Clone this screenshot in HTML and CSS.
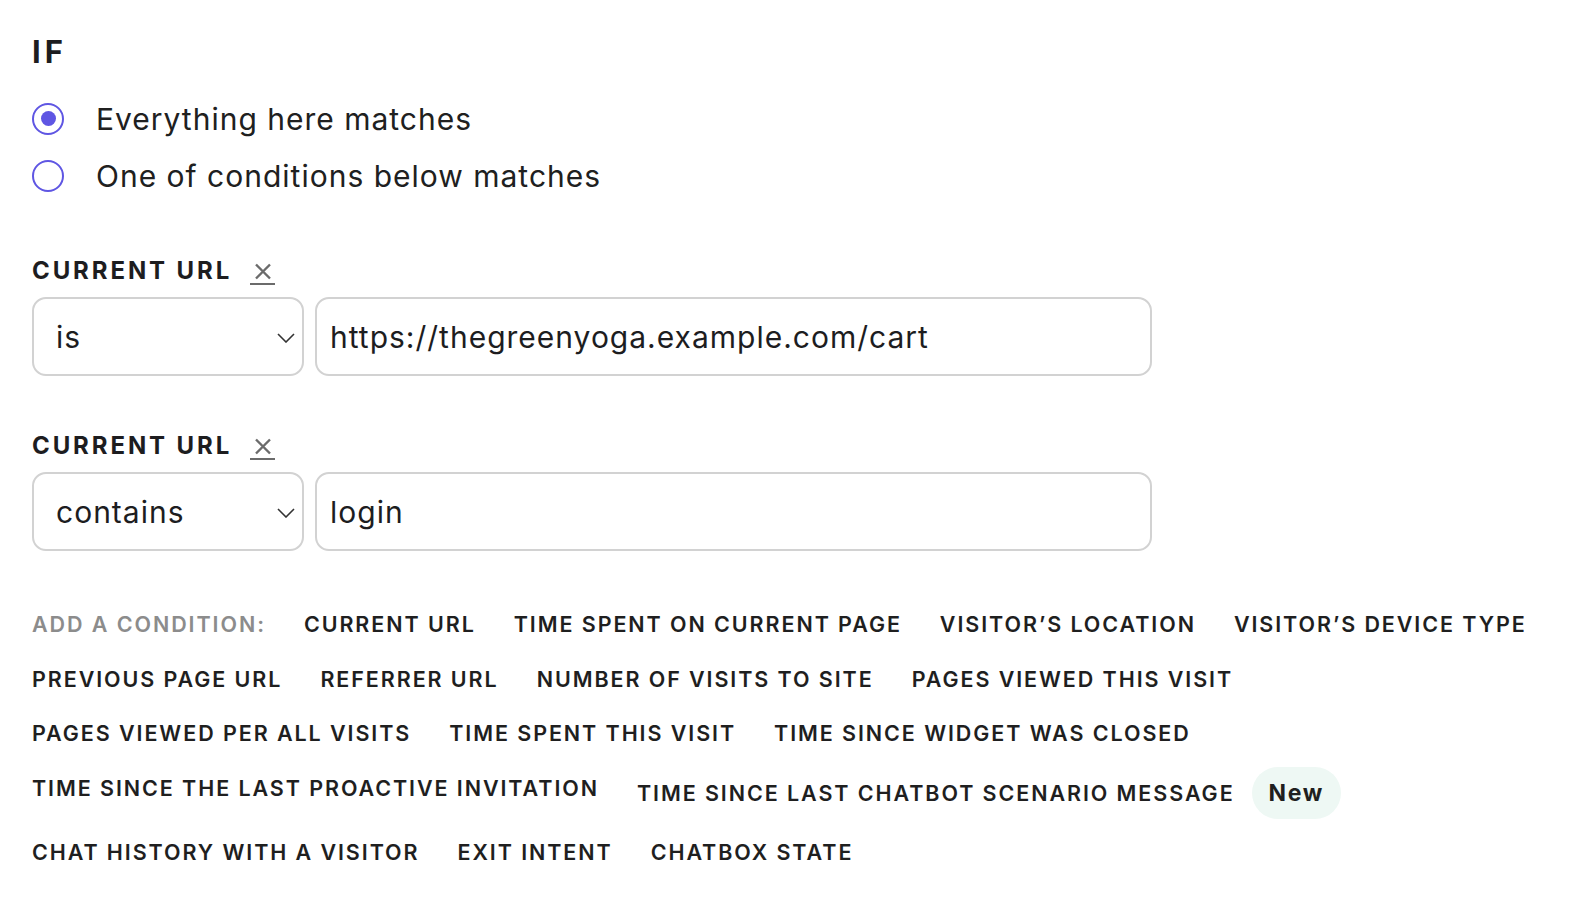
FILE: index.html
```html
<!DOCTYPE html>
<html>
<head>
<meta charset="utf-8">
<link rel="stylesheet" href="styles.css">
</head>
<body>
<div class="page">
  <h2 class="title">IF</h2>
  <div class="radios">
    <label class="radio-row"><span class="radio checked"><span class="dot"></span></span><span class="radio-text">Everything here matches</span></label>
    <label class="radio-row"><span class="radio"></span><span class="radio-text">One of conditions below matches</span></label>
  </div>

  <div class="condition first">
    <div class="cond-head">
      <span class="cond-label">CURRENT URL</span>
      <span class="remove"><svg width="18" height="17" viewBox="0 0 18 17"><path d="M2 1.5 L16 15.5 M16 1.5 L2 15.5" stroke="#6b6b6b" stroke-width="2.4" fill="none"/></svg></span>
    </div>
    <div class="cond-row">
      <div class="select"><span>is</span><svg class="chev" width="18" height="10" viewBox="0 0 18 10"><path d="M1 1 L9 9 L17 1" stroke="#333" stroke-width="1.6" fill="none"/></svg></div>
      <div class="input">https://thegreenyoga.example.com/cart</div>
    </div>
  </div>

  <div class="condition">
    <div class="cond-head">
      <span class="cond-label">CURRENT URL</span>
      <span class="remove"><svg width="18" height="17" viewBox="0 0 18 17"><path d="M2 1.5 L16 15.5 M16 1.5 L2 15.5" stroke="#6b6b6b" stroke-width="2.4" fill="none"/></svg></span>
    </div>
    <div class="cond-row">
      <div class="select"><span>contains</span><svg class="chev" width="18" height="10" viewBox="0 0 18 10"><path d="M1 1 L9 9 L17 1" stroke="#333" stroke-width="1.6" fill="none"/></svg></div>
      <div class="input">login</div>
    </div>
  </div>

  <div class="add">
    <span class="add-label">ADD A CONDITION:</span>
    <span class="opt">CURRENT URL</span>
    <span class="opt">TIME SPENT ON CURRENT PAGE</span>
    <span class="opt">VISITOR’S LOCATION</span>
    <span class="opt">VISITOR’S DEVICE TYPE</span>
    <span class="opt">PREVIOUS PAGE URL</span>
    <span class="opt">REFERRER URL</span>
    <span class="opt">NUMBER OF VISITS TO SITE</span>
    <span class="opt">PAGES VIEWED THIS VISIT</span>
    <span class="opt">PAGES VIEWED PER ALL VISITS</span>
    <span class="opt">TIME SPENT THIS VISIT</span>
    <span class="opt">TIME SINCE WIDGET WAS CLOSED</span>
    <span class="opt">TIME SINCE THE LAST PROACTIVE INVITATION</span>
    <span class="opt with-badge">TIME SINCE LAST CHATBOT SCENARIO MESSAGE <span class="badge">New</span></span>
    <span class="opt">CHAT HISTORY WITH A VISITOR</span>
    <span class="opt">EXIT INTENT</span>
    <span class="opt">CHATBOX STATE</span>
  </div>
</div>
</body>
</html>
```

FILE: styles.css
```css
* { box-sizing: border-box; }
body {
  margin: 0;
  background: #fff;
  font-family: Inter, "Noto Sans", sans-serif;
  color: #1d1d1f;
}
.page {
  padding: 32px 32px 0 32px;
}
.title {
  margin: 0;
  font-size: 31px;
  line-height: 40px;
  font-weight: 700;
  letter-spacing: 4px;
}
.radios {
  margin-top: 18px;
  display: flex;
  flex-direction: column;
}
.radio-row {
  height: 57px;
  display: flex;
  align-items: center;
  gap: 32px;
}
.radio {
  width: 32px;
  height: 32px;
  border: 2px solid #5f56e3;
  border-radius: 50%;
  display: flex;
  align-items: center;
  justify-content: center;
}
.dot {
  width: 15px;
  height: 15px;
  border-radius: 50%;
  background: #5f56e3;
}
.radio-text {
  font-size: 30px;
  line-height: 40px;
  letter-spacing: 1px;
  color: #202020;
}
.condition {
  margin-top: 54px;
}
.condition.first {
  margin-top: 51px;
}
.cond-head {
  display: flex;
  align-items: center;
  gap: 18px;
  height: 32px;
}
.cond-label {
  font-size: 24px;
  font-weight: 700;
  letter-spacing: 2.9px;
  line-height: 32px;
}
.remove {
  display: flex;
  align-items: center;
  justify-content: center;
  width: 25px;
  height: 24px;
  border-bottom: 2px solid #6b6b6b;
  padding-bottom: 2px;
  margin-top: 4px;
}
.cond-row {
  margin-top: 10px;
  display: flex;
  gap: 11px;
}
.select {
  width: 272px;
  height: 79px;
  border: 2px solid #d2d2d2;
  border-radius: 14px;
  display: flex;
  align-items: center;
  justify-content: space-between;
  padding: 0 7px 0 22px;
  font-size: 30px;
  letter-spacing: 1px;
  color: #1d1d1f;
}
.chev { margin-top: 2px; }
.input {
  width: 837px;
  height: 79px;
  border: 2px solid #d2d2d2;
  border-radius: 14px;
  display: flex;
  align-items: center;
  padding: 0 13px;
  font-size: 30px;
  letter-spacing: 1px;
  color: #1d1d1f;
}
.add {
  margin-top: 52px;
  display: flex;
  flex-wrap: wrap;
  align-items: flex-start;
  column-gap: 38px;
  row-gap: 12.5px;
}
.add-label, .opt {
  font-size: 21.5px;
  font-weight: 600;
  letter-spacing: 1.92px;
  line-height: 42px;
  height: 42px;
  white-space: nowrap;
}
.add-label { color: #8c8c8c; }
.opt { color: #1f1f1f; }
.opt.with-badge {
  height: 52px;
  line-height: 52px;
  display: flex;
  align-items: center;
  gap: 17px;
}
.badge {
  height: 52px;
  padding: 0 17px;
  border-radius: 26px;
  background: #eef8f4;
  font-size: 23px;
  letter-spacing: 1.6px;
  display: flex;
  align-items: center;
  font-weight: 700;
}
```
